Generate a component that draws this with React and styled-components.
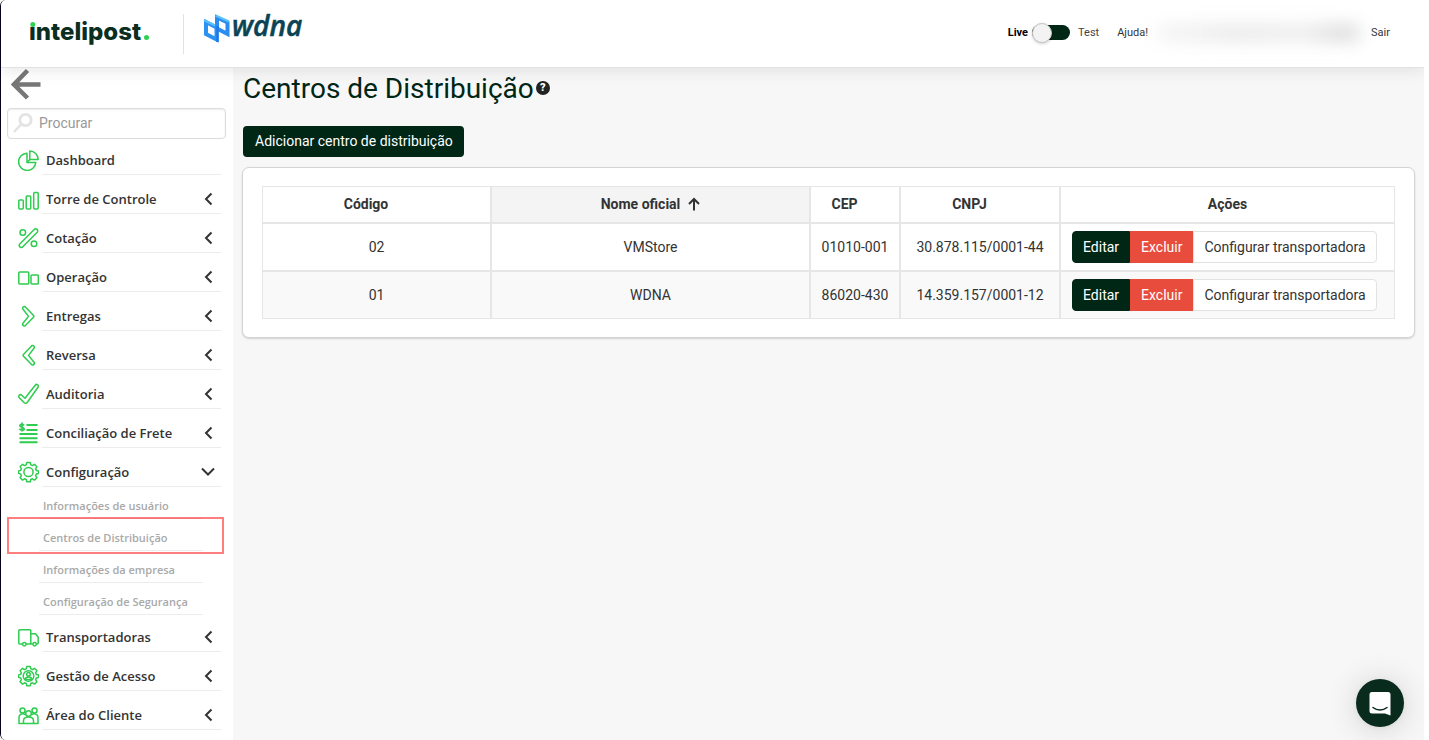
import React, { useState } from "react";
import styled, { createGlobalStyle } from "styled-components";

const GlobalStyle = createGlobalStyle`
  * {
    box-sizing: border-box;
  }
  body {
    margin: 0;
    background: #f7f7f7;
    color: #333;
    font-family: Roboto, sans-serif;
    font-size: 14px;
  }
  ul {
    list-style: none;
    margin: 0;
    padding: 0;
  }
  a {
    color: inherit;
    text-decoration: none;
  }
  button {
    font-family: inherit;
    cursor: pointer;
  }
`;

const Page = styled.div`
  display: flex;
  flex-direction: column;
  height: 100vh;
  overflow: hidden;
  border-left: 1px solid #03041a;
  border-right: 5px solid #fff;
  border-bottom-left-radius: 6px;
  border-top-left-radius: 6px;
  background: #f7f7f7;
`;

const Header = styled.header`
  position: relative;
  z-index: 2;
  flex: none;
  display: flex;
  align-items: center;
  justify-content: space-between;
  height: 68px;
  padding: 0 34px 0 28px;
  background: #fff;
  border-bottom: 1px solid #e2e2e2;
  box-shadow: 0 2px 16px rgba(0, 0, 0, 0.1);
`;

const Brands = styled.div`
  display: flex;
  align-items: center;
  height: 40px;

  svg {
    display: block;
    overflow: visible;
  }
`;

const Partner = styled.div`
  height: 40px;
  margin-left: 32px;
  padding-left: 18px;
  border-left: 1px solid #e2e2e2;
`;

const UserBar = styled.div`
  display: flex;
  align-items: center;
  padding-bottom: 2px;
  font-size: 11px;
  line-height: 16px;
`;

const Mode = styled.span`
  color: ${(props) => (props.$active ? "#000" : "#444")};
  font-weight: ${(props) => (props.$active ? 700 : 400)};
`;

const Switch = styled.label`
  display: flex;
  align-items: center;
  width: 38px;
  height: 15px;
  margin: 0 8px 0 4px;
  border-radius: 8px;
  background: #002616;
  cursor: pointer;

  input {
    appearance: none;
    width: 20px;
    height: 20px;
    flex: none;
    margin: 0;
    border: 1px solid #c4c4c4;
    border-radius: 50%;
    background: #f3f3f3;
    box-shadow: 0 1px 3px rgba(0, 0, 0, 0.2);
    cursor: pointer;
  }
  input:checked {
    margin-left: 18px;
  }
`;

const HelpLink = styled.a`
  margin-left: 18px;
`;

const HiddenAccount = styled.span`
  width: 205px;
  height: 20px;
  margin: 0 9px;
  border-radius: 8px;
  background: linear-gradient(90deg, #f6f6f6, #ececec 40%, #f0f0f0 70%, #e0e0e0 92%, #ebebeb);
  filter: blur(8px);
`;

const Body = styled.div`
  flex: 1;
  display: flex;
  min-height: 0;
`;

const Sidebar = styled.nav`
  flex: none;
  width: 232px;
  padding: 0 7px 0 6px;
  background: #fff;
  overflow: hidden;
`;

const BackButton = styled.button`
  display: block;
  height: 32px;
  margin: 0 0 8px 4px;
  padding: 0;
  border: 0;
  background: none;

  svg {
    display: block;
  }
`;

const SearchBox = styled.label`
  display: flex;
  align-items: center;
  height: 31px;
  padding-left: 5px;
  border: 1px solid #dcdcdc;
  border-radius: 4px;
  box-shadow: inset 0 1px 2px rgba(0, 0, 0, 0.08);
  margin-bottom: 10px;

  svg {
    margin-bottom: 2px;
  }
  input {
    flex: 1;
    min-width: 0;
    margin-left: 6px;
    padding: 0 0 2px;
    border: 0;
    outline: 0;
    background: none;
    font: 14px Roboto, sans-serif;
  }
  input::placeholder {
    color: #999;
    opacity: 1;
  }
`;

const Menu = styled.ul`
  display: flex;
  flex-direction: column;
  gap: 13px;
`;

const MenuLink = styled.a`
  display: flex;
  align-items: flex-start;
  gap: 3px;
  height: 26px;
  padding: 0 5px 0 11px;

  > svg {
    flex: none;
  }
`;

const MenuLabel = styled.span`
  flex: 1;
  display: flex;
  align-items: center;
  justify-content: space-between;
  height: 26px;
  padding: 0 6px 4px 4px;
  border-bottom: 1px solid #ececec;
  font-family: "Open Sans", sans-serif;
  font-size: 13px;
  font-weight: 600;
`;

const SubMenu = styled.ul`
  margin-bottom: -2px;
  padding: 0 23px 0 32px;
`;

const SubItem = styled.li`
  position: relative;
  height: 32px;
  border-bottom: 1px solid #ececec;
  color: #a9a9a9;
  font: 600 11px/38px "Open Sans", sans-serif;

  a {
    display: block;
    padding-left: 4px;
  }
`;

// marks the entry of the page that is open
const Marker = styled.span`
  position: absolute;
  inset: -2px -21px -4px -32px;
  border: 2px solid rgba(255, 0, 0, 0.5);
  pointer-events: none;
`;

const Main = styled.main`
  flex: 1;
  min-width: 0;
  padding: 0 9px 0 10px;
`;

const TitleRow = styled.div`
  display: flex;
  align-items: center;
  gap: 2px;
  height: 40px;
  margin-bottom: 18px;
`;

const Title = styled.h1`
  margin: 0;
  color: #002616;
  font-size: 28px;
  font-weight: 400;
`;

const HelpButton = styled.button`
  width: 14px;
  height: 14px;
  padding: 0;
  border: 0;
  border-radius: 50%;
  background: #222;
  color: #fff;
  font-size: 11px;
  font-weight: 900;
  line-height: 14px;
`;

const AddButton = styled.button`
  height: 31px;
  padding: 0 11px 2px 12px;
  border: 0;
  border-radius: 4px;
  background: #002616;
  color: #fff;
  font-size: 14px;
`;

const Card = styled.section`
  margin: 10px 0 0 -1px;
  padding: 18px 19px;
  border: 1px solid #d4d4d4;
  border-radius: 7px;
  background: #fff;
  box-shadow: 0 1px 2px rgba(0, 0, 0, 0.15);
`;

const Table = styled.table`
  width: 100%;
  table-layout: fixed;
  border-spacing: 0;
  text-align: center;

  th,
  td {
    border: 1px solid #e6e6e6;
  }
  tbody tr:nth-child(even) {
    background: #f9f9f9;
  }
`;

const Col = styled.col`
  width: ${(props) => props.$width || "auto"};
`;

const HeadCell = styled.th`
  height: 37px;
  padding: 0 ${(props) => (props.$sortable ? "21px" : "0")} 2px 0;
  background: ${(props) => (props.$sorted ? "#f4f4f4" : "transparent")};
  font-weight: 700;
`;

const SortLabel = styled.span`
  display: flex;
  align-items: center;
  justify-content: center;
  gap: 8px;
`;

const Cell = styled.td`
  height: 48px;
  padding: 0;
`;

const Actions = styled.div`
  display: flex;
  padding-left: 11px;
`;

const tones = {
  dark: ["#002616", "#fff", "#002616"],
  danger: ["#e84c3d", "#fff", "#e84c3d"],
  plain: ["#fff", "#333", "#e2e2e2"],
};

const ActionButton = styled.button`
  height: 32px;
  padding: 0 10px;
  border: 1px solid ${(props) => tones[props.$tone][2]};
  background: ${(props) => tones[props.$tone][0]};
  color: ${(props) => tones[props.$tone][1]};
  font-size: 14px;

  &:first-child {
    border-radius: 4px 0 0 4px;
  }
  &:last-child {
    border-radius: 0 4px 4px 0;
  }
`;

const ChatButton = styled.button`
  position: fixed;
  right: 25px;
  bottom: 13px;
  display: flex;
  align-items: center;
  justify-content: center;
  width: 48px;
  height: 48px;
  padding: 0;
  border: 0;
  border-radius: 50%;
  background: #082b1e;
  box-shadow: 0 1px 6px rgba(0, 0, 0, 0.06), 0 2px 32px rgba(0, 0, 0, 0.16);
`;

const gear =
  "M8.8 1.5h3.4l.6 2.4 1.6.7 2.1-1.3 2.4 2.4-1.3 2.1.7 1.6 2.3.6v2.4l-2.3.6-.7 1.6 1.3 2.1-2.4 2.4-2.1-1.3-1.6.7-.6 2.3H8.8l-.6-2.3-1.6-.7-2.1 1.3-2.4-2.4 1.3-2.1-.7-1.6-2.1-.6v-2.4l2.1-.6.7-1.6-1.3-2.1 2.4-2.4 2.1 1.3 1.6-.7z";

const icons = {
  pie: (
    <>
      <path d="M9 4.200a8.600 8.600 0 1 0 8.800 9.200H9z" />
      <path d="M11.800 2v8.400h8.400A8.500 8.500 0 0 0 11.800 2z" />
      <path d="m9 13.400 2.800-3" />
    </>
  ),
  bars: (
    <>
      <rect x="0.800" y="12" width="4.500" height="9" rx="1" />
      <rect x="8.200" y="8" width="4.500" height="13" rx="1" />
      <rect x="15.700" y="4.500" width="4.500" height="16.500" rx="1" />
    </>
  ),
  percent: (
    <>
      <circle cx="4.800" cy="5.500" r="2.800" />
      <circle cx="16" cy="16.700" r="2.800" />
      <path d="M16.200 2.500a1.900 1.900 0 0 1 3 2.700L4.800 19.700a1.900 1.900 0 0 1-3-2.700z" />
    </>
  ),
  boxes: (
    <>
      <rect x="0.800" y="6" width="10" height="12" rx="1" />
      <rect x="13" y="9" width="7.300" height="9" rx="1" />
    </>
  ),
  right: (
    <path d="M5 4.200a1.600 1.600 0 0 1 2.700-2l7.800 8.300a1.500 1.500 0 0 1 0 1.800l-7.800 8a1.600 1.600 0 0 1-2.700-2l5.500-6.900z" />
  ),
  left: (
    <path d="M16 4.200a1.600 1.600 0 0 0-2.700-2l-7.800 8.300a1.500 1.500 0 0 0 0 1.800l7.800 8a1.600 1.600 0 0 0 2.700-2l-5.500-6.900z" />
  ),
  check: (
    <path d="M17.200 2.200a1.700 1.700 0 0 1 2.800 2L9.200 19.500a2 2 0 0 1-2.900.2l-5-5a1.700 1.700 0 0 1 2.400-2.500L7 15.300z" />
  ),
  bill: (
    <>
      <path d="M8.500 3h11M8.500 8h11M1.500 12h18M1.500 16.300h18M1.500 20.300h18" strokeWidth="2" />
      <path d="M6 3.400C5 2 1.800 2 1.800 3.800S6.200 5 6.200 7 2.400 8.300 1.400 6.800M4 .6v9" strokeWidth="1.700" />
    </>
  ),
  gear: (
    <>
      <path d={gear} />
      <circle cx="10.500" cy="11" r="4.600" />
    </>
  ),
  truck: (
    <>
      <path d="M4.500 18H1.800a1 1 0 0 1-1-1V4.800a1 1 0 0 1 1-1h10a1 1 0 0 1 1 1V18H8M12.800 7.800h4.700l2.700 3.500V17a1 1 0 0 1-1 1h-.7M12.800 18h2" />
      <circle cx="6.300" cy="18.200" r="1.700" />
      <circle cx="16.600" cy="18.200" r="1.700" />
    </>
  ),
  access: (
    <>
      <path d={gear} />
      <circle cx="10.500" cy="11" r="5.300" />
      <circle cx="10.500" cy="9.300" r="1.800" />
      <path d="M7 14.600c.6-3.600 6.400-3.600 7 0z" />
    </>
  ),
  people: (
    <>
      <circle cx="4.500" cy="6.500" r="2.500" />
      <circle cx="16.500" cy="6.500" r="2.500" />
      <circle cx="10.500" cy="9.500" r="2.800" />
      <path d="M5.500 19.500v-2.800c0-5 10-5 10 0v2.800zM5.500 19.500H1V13c0-3 4-4.300 6.300-2.300M15.500 19.500H20V13c0-3-4-4.300-6.300-2.300" />
    </>
  ),
};

const menu = [
  { label: "Dashboard", icon: "pie", leaf: true },
  { label: "Torre de Controle", icon: "bars" },
  { label: "Cotação", icon: "percent" },
  { label: "Operação", icon: "boxes" },
  { label: "Entregas", icon: "right" },
  { label: "Reversa", icon: "left" },
  { label: "Auditoria", icon: "check" },
  { label: "Conciliação de Frete", icon: "bill" },
  {
    label: "Configuração",
    icon: "gear",
    items: [
      "Informações de usuário",
      "Centros de Distribuição",
      "Informações da empresa",
      "Configuração de Segurança",
    ],
  },
  { label: "Transportadoras", icon: "truck" },
  { label: "Gestão de Acesso", icon: "access" },
  { label: "Área do Cliente", icon: "people" },
];

const centers = [
  { code: "02", name: "VMStore", cep: "01010-001", cnpj: "30.878.115/0001-44" },
  { code: "01", name: "WDNA", cep: "86020-430", cnpj: "14.359.157/0001-12" },
];

function MenuIcon({ name }) {
  return (
    <svg width="21" height="22" viewBox="0 0 21 22" fill="none" stroke="#2ecc4f" strokeWidth="1.500" strokeLinejoin="round">
      {icons[name]}
    </svg>
  );
}

function Chevron({ open }) {
  return (
    <svg width="14" height="14" viewBox="0 0 14 14" fill="none" stroke="#333" strokeWidth="2">
      <path d={open ? "M1 3.500 7 9.500 13 3.500" : "M10.500 1.500 5 7 10.500 12.500"} />
    </svg>
  );
}

function IntelipostLogo() {
  return (
    <svg width="122" height="32" viewBox="0 0 122 32">
      <text x="0" y="22" fontFamily="Inter, sans-serif" fontWeight="800" fontSize="24" fill="#0a2e20">
        ıntelipost
      </text>
      <circle cx="3.800" cy="6.500" r="2.500" fill="#2fd153" />
      <circle cx="117.500" cy="19.500" r="2.500" fill="#2fd153" />
    </svg>
  );
}

function WdnaLogo() {
  return (
    <svg width="110" height="38" viewBox="0 0 110 38">
      <g fill="none" strokeWidth="4">
        <path d="M4 8 14.500 13.500V25.500L4 20z" stroke="#2c92f2" />
        <path d="M15 3.500 25.500 8.500V20L15 14.500z" stroke="#2a8cee" />
        <path d="M2 6 13 11.500M13.500 1.500 27 7.500" stroke="#5cc0fd" strokeWidth="2" />
        <path d="M15.500 12V28" stroke="#1f78e4" strokeWidth="2.500" />
      </g>
      <text x="30" y="22" fontFamily="'Open Sans', sans-serif" fontStyle="italic" fontWeight="600" fontSize="28" fill="#0b4355" stroke="#0b4355" strokeWidth="0.500">
        wdna
      </text>
    </svg>
  );
}

function TopBar() {
  const [test, setTest] = useState(false);

  return (
    <Header>
      <Brands>
        <IntelipostLogo />
        <Partner>
          <WdnaLogo />
        </Partner>
      </Brands>
      <UserBar>
        <Mode $active={!test}>Live</Mode>
        <Switch>
          <input type="checkbox" role="switch" aria-label="Test" checked={test} onChange={(e) => setTest(e.target.checked)} />
        </Switch>
        <Mode $active={test}>Test</Mode>
        <HelpLink href="#ajuda">Ajuda!</HelpLink>
        <HiddenAccount />
        <a href="#sair">Sair</a>
      </UserBar>
    </Header>
  );
}

function SideMenu() {
  const [search, setSearch] = useState("");

  return (
    <Sidebar>
      <BackButton type="button" aria-label="Voltar">
        <svg width="30" height="32" viewBox="0 0 30 32" fill="none" stroke="#777" strokeWidth="4.500">
          <path d="M29.500 16.500H4M16.500 2.500 3 16.500 16.500 30" />
        </svg>
      </BackButton>

      <SearchBox>
        <svg width="20" height="22" viewBox="0 0 20 22" fill="none" stroke="#e3e3e3">
          <circle cx="12.500" cy="8" r="5.700" strokeWidth="2.800" />
          <path d="M8.500 12 1 20" strokeWidth="2.500" />
        </svg>
        <input type="text" placeholder="Procurar" aria-label="Procurar" value={search} onChange={(e) => setSearch(e.target.value)} />
      </SearchBox>

      <Menu>
        {menu.map((entry) => (
          <li key={entry.label}>
            <MenuLink href="#menu">
              <MenuIcon name={entry.icon} />
              <MenuLabel>
                {entry.label}
                {!entry.leaf && <Chevron open={!!entry.items} />}
              </MenuLabel>
            </MenuLink>
            {entry.items && (
              <SubMenu>
                {entry.items.map((item) => (
                  <SubItem key={item}>
                    <a href="#submenu">{item}</a>
                    {item === "Centros de Distribuição" && <Marker />}
                  </SubItem>
                ))}
              </SubMenu>
            )}
          </li>
        ))}
      </Menu>
    </Sidebar>
  );
}

function CentersTable() {
  return (
    <Table>
      <colgroup>
        <Col $width="229px" />
        <Col />
        <Col $width="90px" />
        <Col $width="160px" />
        <Col $width="335px" />
      </colgroup>
      <thead>
        <tr>
          <HeadCell $sortable>Código</HeadCell>
          <HeadCell $sorted>
            <SortLabel>
              Nome oficial
              <svg width="12" height="14" viewBox="0 0 12 14" fill="none" stroke="#333" strokeWidth="2">
                <path d="M6 13.500V2M1 7 6 2 11 7" />
              </svg>
            </SortLabel>
          </HeadCell>
          <HeadCell $sortable>CEP</HeadCell>
          <HeadCell $sortable>CNPJ</HeadCell>
          <HeadCell>Ações</HeadCell>
        </tr>
      </thead>
      <tbody>
        {centers.map((center) => (
          <tr key={center.code}>
            <Cell>{center.code}</Cell>
            <Cell>{center.name}</Cell>
            <Cell>{center.cep}</Cell>
            <Cell>{center.cnpj}</Cell>
            <Cell>
              <Actions>
                <ActionButton type="button" $tone="dark">Editar</ActionButton>
                <ActionButton type="button" $tone="danger">Excluir</ActionButton>
                <ActionButton type="button" $tone="plain">Configurar transportadora</ActionButton>
              </Actions>
            </Cell>
          </tr>
        ))}
      </tbody>
    </Table>
  );
}

function App() {
  return (
    <>
      <GlobalStyle />
      <Page>
        <TopBar />
        <Body>
          <SideMenu />
          <Main>
            <TitleRow>
              <Title>Centros de Distribuição</Title>
              <HelpButton type="button">?</HelpButton>
            </TitleRow>
            <AddButton type="button">Adicionar centro de distribuição</AddButton>
            <Card>
              <CentersTable />
            </Card>
          </Main>
        </Body>
      </Page>
      <ChatButton type="button" aria-label="Chat">
        <svg width="22" height="25" viewBox="0 0 22 25">
          <path d="M3 1h16a2.500 2.500 0 0 1 2.500 2.500V24.500L16 22.500H3A2.500 2.500 0 0 1 .5 20V3.500A2.500 2.500 0 0 1 3 1z" fill="#fff" />
          <path d="M4 16.500c4 3.300 10 3.300 14 0" fill="none" stroke="#082b1e" strokeWidth="1.500" strokeLinecap="round" />
        </svg>
      </ChatButton>
    </>
  );
}

export default App;
